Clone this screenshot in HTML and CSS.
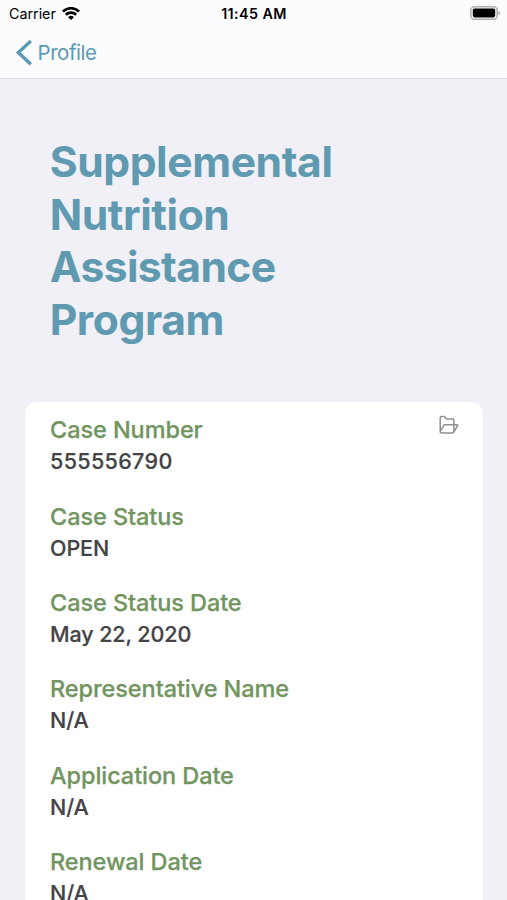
FILE: index.html
```html
<!DOCTYPE html>
<html lang="en">
<head>
<meta charset="utf-8">
<title>Supplemental Nutrition Assistance Program</title>
<link rel="stylesheet" href="styles.css">
</head>
<body>
<header class="top">
  <div class="status">
    <div class="carrier"><span class="carrier-name">Carrier</span>
      <svg class="wifi" width="18" height="13" viewBox="0 0 18 13" fill="none" stroke="#000" stroke-width="2.7"><path d="M.9 4.5a11.7 11.7 0 0 1 16.2 0M3.8 7.7a7.5 7.5 0 0 1 10.4 0"/><path d="M6.1 10.2a4.2 4.2 0 0 1 5.8 0L9 13z" fill="#000" stroke="none"/></svg>
    </div>
    <div class="time">11:45 AM</div>
    <div class="power"><svg width="31" height="14" viewBox="0 0 31 14"><rect x=".8" y=".8" width="26.4" height="12.4" rx="3.8" fill="none" stroke="#b0b0b0" stroke-width="1.6"/><rect x="2.8" y="2.6" width="22.4" height="8.8" rx="1.8"/><path d="M28.5 4.7c2 .8 2 3.8 0 4.6z" fill="#b0b0b0"/></svg></div>
  </div>
  <nav class="nav">
    <svg width="17" height="28" viewBox="0 0 17 28" fill="none" stroke="#5b9ab2" stroke-width="3.4"><path d="M14.8 2 2.4 13.6l12.4 11.6"/></svg>
    <a class="back">Profile</a>
  </nav>
</header>
<main>
  <h1 class="title">Supplemental<br>Nutrition<br><span class="tight">Assistance</span><br>Program</h1>
  <section class="card">
    <svg class="folder" width="20" height="20" viewBox="0 0 20 20" fill="none" stroke="#8e8e8e" stroke-width="1.5" stroke-linejoin="round"><path d="M1.2 16.5V3q0-1.6 1.5-1.6h2.1q1.1 0 1.6 1.3.5 1.4 1.6 1.4h5.6q1.3 0 1.3 1.4v4.2M1.2 16.5l3.4-5.9q.4-.9 1.4-.9h12q1 0 .6 1l-3.5 6q-.7 1.2-2 1.2H2.6q-1.4 0-1.4-1.4M14.9 9.7v7"/></svg>
    <dl class="fields">
      <div class="field"><dt>Case Number</dt><dd class="digits">555556790</dd></div>
      <div class="field"><dt>Case Status</dt><dd>OPEN</dd></div>
      <div class="field"><dt>Case Status Date</dt><dd>May 22, 2020</dd></div>
      <div class="field"><dt>Representative Name</dt><dd>N/A</dd></div>
      <div class="field"><dt>Application Date</dt><dd>N/A</dd></div>
      <div class="field"><dt>Renewal Date</dt><dd>N/A</dd></div>
    </dl>
  </section>
</main>
</body>
</html>
```
FILE: styles.css
```css
* { box-sizing: border-box; }
body { margin: 0; height: 900px; overflow: hidden; background: #f1f0f6; font-family: Inter, sans-serif; }
.top { height: 79px; background: #fcfcfe; border-bottom: 1px solid #dedee2; }
.status { height: 27px; display: grid; grid-template-columns: 1fr auto 1fr; align-items: center; padding: 0 6px 0 9px; font-size: 14.4px; }
.carrier { display: flex; align-items: center; gap: 6px; }
.carrier-name { letter-spacing: -.05px; }
.time { margin-right: 2px; font-weight: 600; font-size: 14.3px; letter-spacing: .42px; }
.power { display: flex; justify-content: flex-end; margin-top: -1px; }
.nav { height: 51px; display: flex; align-items: center; gap: 4.5px; padding-left: 16px; color: #5b9ab2; font-size: 20.5px; letter-spacing: -.45px; }
.back { margin-top: -1px; }
.title { margin: 57px 0 0 49.7px; font-size: 42.6px; line-height: 52.5px; font-weight: 700; letter-spacing: -.42px; color: #5f9ab1; }
.tight { letter-spacing: -.6px; }
.card { position: relative; margin: 56px 24px 0 25px; height: 520px; padding: 12.4px 25px; background: #fff; border-radius: 12px; }
.folder { position: absolute; right: 24px; top: 12.5px; }
.fields { margin: 0; }
.field { height: 86.35px; }
dt { font-size: 23.5px; line-height: 32px; font-weight: 500; letter-spacing: -.08px; color: #72955f; -webkit-text-stroke: .25px #72955f; }
dd { margin: 0; font-size: 21.5px; line-height: 31px; font-weight: 500; letter-spacing: -.1px; color: #444346; -webkit-text-stroke: .2px #444346; }
.digits { letter-spacing: .35px; }
```
